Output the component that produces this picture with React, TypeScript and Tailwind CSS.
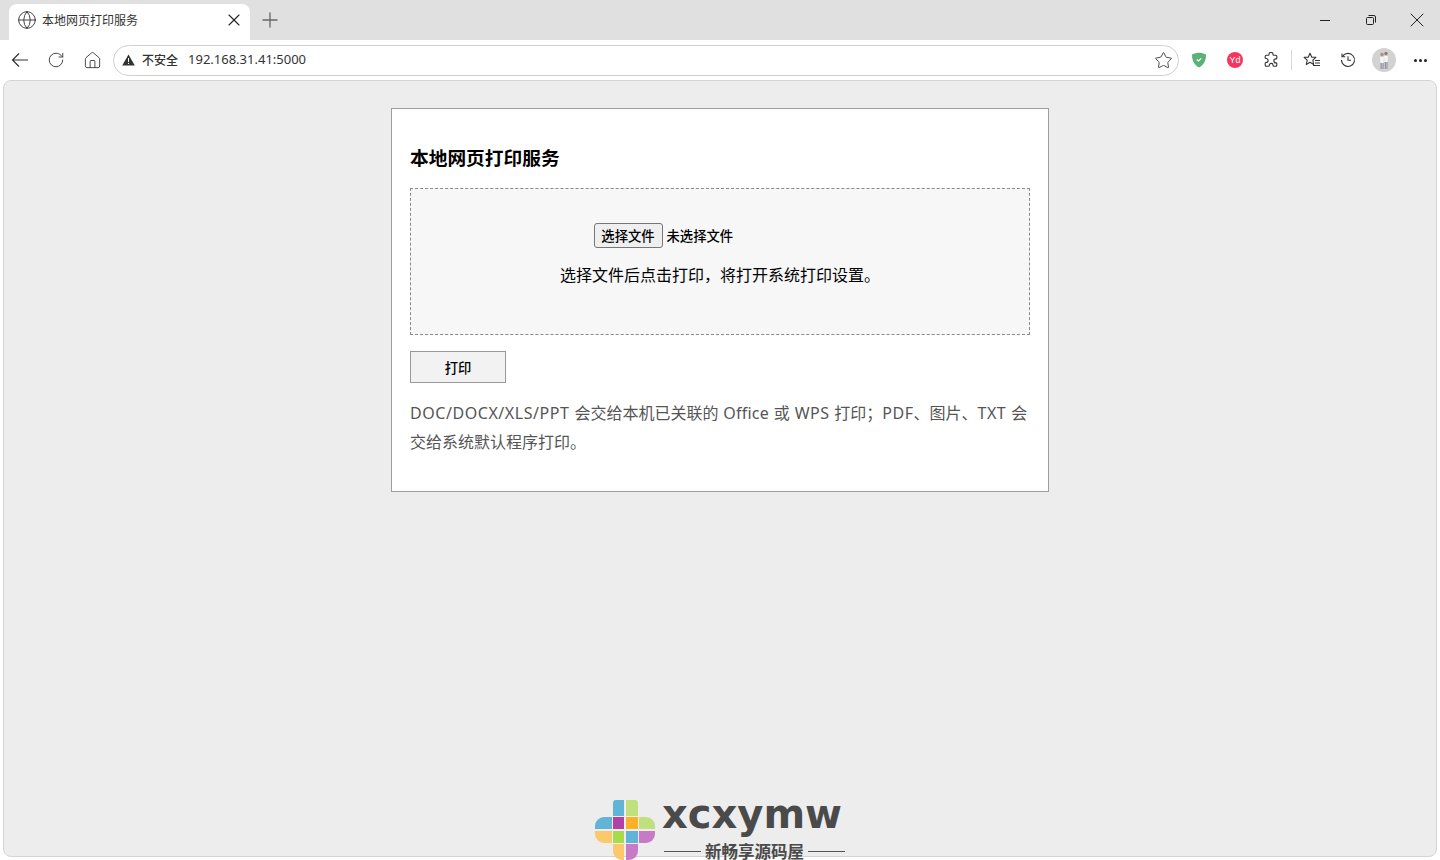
import { Globe, Home, Plus, RotateCw, Star, X } from 'lucide-react';

const uiFont = "font-['Noto_Sans','Noto_Sans_CJK_SC',sans-serif]";

function ToolButton({ children }: { children: React.ReactNode }) {
  return <div className="flex h-9 w-9 shrink-0 items-center justify-center text-[#333]">{children}</div>;
}

function WindowButton({ children }: { children: React.ReactNode }) {
  return <div className="flex h-10 w-[46px] items-center justify-center text-[#222]">{children}</div>;
}

function BackArrow() {
  return (
    <svg width="18" height="16" viewBox="0 0 18 16" fill="none" stroke="currentColor" strokeWidth="1.2">
      <path d="M17 8H1.500M8 1.500L1.500 8 8 14.500" />
    </svg>
  );
}

function Puzzle() {
  return (
    <svg width="16" height="16" viewBox="0 0 16 16" fill="none" stroke="currentColor" strokeWidth="1.1">
      <path d="M6 2.400a2 2 0 0 1 4 0c0 .5.2.8.7.8h2.100c.6 0 1 .4 1 1v2c0 .5-.4.8-.9.7a2 2 0 1 0 0 4c.5-.1.9.2.9.7v1.600c0 .6-.4 1-1 1h-2c-.5 0-.8-.4-.7-.9a1.900 1.900 0 1 0-3.800 0c.1.5-.2.9-.7.9H3.200c-.6 0-1-.4-1-1v-2c0-.5.4-.8.9-.7a2 2 0 1 0 0-4c-.5.1-.9-.2-.9-.7V4.200c0-.6.4-1 1-1h2.100c.5 0 .7-.3.7-.8z" />
    </svg>
  );
}

function Favorites() {
  return (
    <svg width="18" height="16" viewBox="0 0 18 16" fill="none" stroke="currentColor" strokeWidth="1.1">
      <path d="M7 1.300l1.800 4h4.100l-3.100 2.900.9 4.300L7 10.300l-3.700 2.200.9-4.300-3.100-2.900h4.100z" strokeLinejoin="round" />
      <path d="M12 8.500h5M12 11h5M10 13.500h7" />
    </svg>
  );
}

function History() {
  return (
    <svg width="16" height="16" viewBox="0 0 16 16" fill="none" stroke="currentColor" strokeWidth="1.1">
      <path d="M2.400 4.600A6.500 6.500 0 1 1 1.500 8" />
      <path d="M2 1.500v3.300h3.300M8 4.200V8.300h3" />
    </svg>
  );
}

function Avatar() {
  return (
    <svg width="24" height="24" viewBox="0 0 24 24">
      <circle cx="12" cy="12" r="12" fill="#d3d1d1" />
      <circle cx="10" cy="6.500" r="1.700" fill="#a58f86" />
      <circle cx="14" cy="5.500" r="1.700" fill="#8f7a72" />
      <path d="M8 9h4l-.5 6h-3zM12 8h4l-.5 6h-3z" fill="#f6f5f5" />
      <path d="M8.500 15h1.200v6H8.500zM10.500 15h1.100v6h-1.100zM12.800 14h1.100v7h-1.100zM14.500 14h1v7h-1z" fill="#8b929b" />
    </svg>
  );
}

function LogoMark() {
  return (
    <svg width="60" height="60" viewBox="0 0 60 60" className="shrink-0">
      <path d="M18 3a3 3 0 0 1 3-3h8v16H18z" fill="#62b4d6" />
      <path d="M31 0h9a3 3 0 0 1 3 3v13H31z" fill="#bfe07c" />
      <path d="M9 17h8v12H0v-3a9 9 0 0 1 9-9z" fill="#62b4d6" />
      <path d="M44 17h7a9 9 0 0 1 9 9v3H44z" fill="#bfe07c" />
      <rect x="18" y="17" width="11" height="12" fill="#b240a8" />
      <rect x="31" y="17" width="12" height="12" fill="#fbb126" />
      <rect x="18" y="31" width="11" height="12" fill="#a5dc48" />
      <rect x="31" y="31" width="12" height="12" fill="#62b4d6" />
      <path d="M0 31h17v12H9a9 9 0 0 1-9-9z" fill="#fbc96c" />
      <path d="M44 31h16v3a9 9 0 0 1-9 9h-7z" fill="#c77ac6" />
      <path d="M18 44h11v16h-2a9 9 0 0 1-9-9z" fill="#fbc96c" />
      <path d="M31 44h12v7a9 9 0 0 1-9 9h-3z" fill="#c77ac6" />
    </svg>
  );
}

export default function App() {
  return (
    <div className={`relative flex h-[860px] w-[1440px] flex-col overflow-hidden bg-white ${uiFont}`}>
      {/* Tab strip */}
      <div className="flex h-10 shrink-0 items-end bg-[#e0e0e0] pl-[9px]">
        <div className="flex h-9 w-[241px] items-center rounded-t-lg bg-white pb-1 pl-2 pr-[6px]">
          <Globe size={20} strokeWidth={1.1} className="text-[#333]" />
          <span className="ml-[5px] flex-1 font-['Noto_Sans_CJK_SC',sans-serif] text-xs text-[#333]">本地网页打印服务</span>
          <X size={20} strokeWidth={1.3} className="text-[#222]" />
        </div>
        <div className="flex h-10 w-10 items-center justify-center text-[#666]">
          <Plus size={24} strokeWidth={1.3} />
        </div>
        <div className="ml-auto flex">
          <WindowButton>
            <div className="h-px w-2.5 bg-[#222]" />
          </WindowButton>
          <WindowButton>
            <svg width="10" height="10" viewBox="0 0 10 10" fill="none" stroke="currentColor" strokeWidth="1">
              <rect x="0.500" y="2.500" width="7" height="7" rx="1" />
              <path d="M2.500 .500h5.500a1.500 1.500 0 0 1 1.500 1.500v5.500" />
            </svg>
          </WindowButton>
          <WindowButton>
            <X size={24} strokeWidth={1} />
          </WindowButton>
        </div>
      </div>

      {/* Toolbar */}
      <div className="flex h-10 shrink-0 items-center bg-white pl-0.5 pr-0.5">
        <ToolButton><BackArrow /></ToolButton>
        <ToolButton><RotateCw size={18} strokeWidth={1.2} /></ToolButton>
        <ToolButton><Home size={19} strokeWidth={1.1} /></ToolButton>
        <div className="ml-[3px] flex h-[31px] w-[1066px] items-center rounded-full border border-[#cfcfcf] bg-white pl-2 pr-[5px]">
          <svg width="13" height="12" viewBox="0 0 13 12" className="shrink-0">
            <path d="M6.500 .5L12.800 11.500H.2z" fill="#333" />
            <rect x="6" y="4" width="1" height="4" fill="#fff" />
            <rect x="6" y="9" width="1" height="1" fill="#fff" />
          </svg>
          <span className="ml-[7px] font-['Noto_Sans_CJK_SC',sans-serif] text-xs font-medium text-[#333]">不安全</span>
          <span className="ml-[10px] text-[13px] text-[#333]">192.168.31.41:5000</span>
          <Star size={19} strokeWidth={1.1} className="ml-auto text-[#333]" />
        </div>
        <div className="ml-0.5 flex">
          <ToolButton>
            <svg width="16" height="16" viewBox="0 0 16 16">
              <path d="M8 .8c2.300 0 4.600.6 7 1.700 0 6-2 10.500-7 13-5-2.500-7-7-7-13C3.400 1.400 5.700.8 8 .8z" fill="#5cb176" />
              <path d="M5.800 7.500L7.500 9l2.700-2.700" fill="none" stroke="#fff" strokeWidth="1.200" />
            </svg>
          </ToolButton>
          <ToolButton>
            <div className="flex h-4 w-4 items-center justify-center rounded-full bg-[#f5365c] font-['Liberation_Sans',sans-serif] text-[9px] leading-none text-white">Yd</div>
          </ToolButton>
          <ToolButton><Puzzle /></ToolButton>
        </div>
        <div className="mx-0.5 h-5 w-px bg-[#d8d8d8]" />
        <div className="flex">
          <ToolButton><Favorites /></ToolButton>
          <ToolButton><History /></ToolButton>
          <ToolButton><Avatar /></ToolButton>
          <ToolButton>
            <div className="flex gap-[2px]">
              <div className="h-[3px] w-[3px] rounded-full bg-[#222]" />
              <div className="h-[3px] w-[3px] rounded-full bg-[#222]" />
              <div className="h-[3px] w-[3px] rounded-full bg-[#222]" />
            </div>
          </ToolButton>
        </div>
      </div>

      {/* Page */}
      <div className="mx-[3px] mb-[3px] flex-1 rounded-lg border border-[#d4d4d4] bg-[#ededed] pt-[27px]">
        <div className="mx-auto h-[384px] w-[658px] border border-[#9e9e9e] bg-white p-[18px] font-['Noto_Sans','Noto_Sans_CJK_SC',sans-serif] text-black">
          <h3 className="mt-4 font-['Noto_Sans_CJK_SC',sans-serif] text-[18.72px] font-bold leading-[27px] text-black">本地网页打印服务</h3>
          <div className="mt-[18px] flex h-[147px] flex-col items-center border border-dashed border-[#8a8a8a] bg-[#f7f7f7] pt-[34px]">
            <div className="flex w-[253px] items-center">
              <button className="h-[25px] w-[69px] rounded-[3px] border border-[#767676] bg-[#efefef] font-['Noto_Sans_CJK_SC',sans-serif] text-[13.33px] font-medium leading-none text-black">选择文件</button>
              <span className="ml-1 font-['Noto_Sans_CJK_SC',sans-serif] text-[13.33px] font-medium text-black">未选择文件</span>
            </div>
            <p className="mt-[14px] font-['Noto_Sans_CJK_SC',sans-serif] text-base leading-6 text-black">选择文件后点击打印，将打开系统打印设置。</p>
          </div>
          <button className="mt-4 block h-8 w-24 border border-[#999] bg-[#f2f2f2] pt-px font-['Noto_Sans_CJK_SC',sans-serif] text-[13.33px] font-medium text-black">打印</button>
          <p className="mt-4 text-base leading-[29px] text-[#555] [word-spacing:0.8px]">
            <span className="tracking-[0.55px]">DOC/DOCX/XLS/PPT</span> 会交给本机已关联的 <span className="tracking-[0.2px]">Office</span> 或 <span className="tracking-[0.4px]">WPS</span> 打印；<span className="tracking-[0.5px]">PDF</span>、图片、<span className="tracking-[0.5px]">TXT</span> 会<br />交给系统默认程序打印。
          </p>
        </div>
      </div>

      {/* Watermark */}
      <div className="absolute left-[595px] top-[800px] flex h-[60px] w-[250px] items-start">
        <LogoMark />
        <div className="ml-[7px] flex w-[183px] flex-col">
          <span className="h-[43px] whitespace-nowrap font-['DejaVu_Sans',sans-serif] text-[40px] font-bold leading-[28px] text-[#4a4a4a]">xcxymw</span>
          <div className="ml-0.5 flex h-[17px] items-center">
            <div className="h-px flex-1 bg-[#555]" />
            <span className="mx-1 font-['Noto_Sans_CJK_SC',sans-serif] text-[16.5px] font-bold leading-[17px] text-[#4a4a4a]">新畅享源码屋</span>
            <div className="h-px flex-1 bg-[#555]" />
          </div>
        </div>
      </div>
    </div>
  );
}
